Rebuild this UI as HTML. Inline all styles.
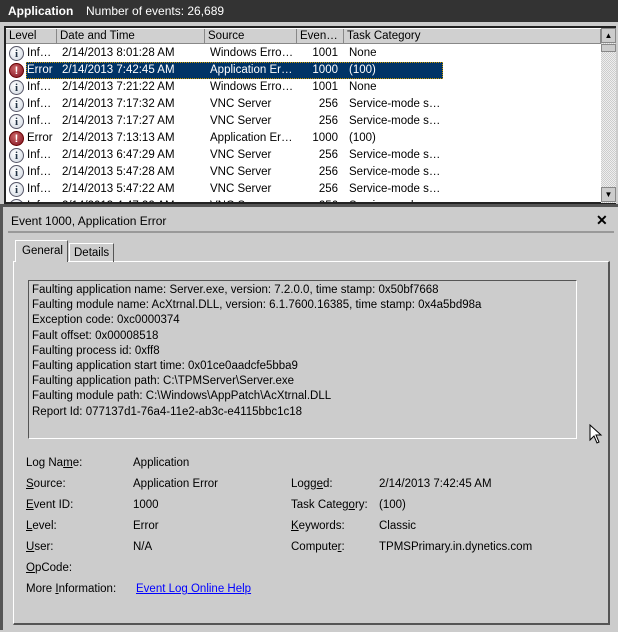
<html><head><style>
body{margin:0;width:618px;height:630px;background:#cccccc;font-family:"Liberation Sans",sans-serif;font-size:11.5px;color:#000;position:relative;overflow:hidden}
.a{position:absolute;white-space:nowrap}
.top{left:0;top:0;width:618px;height:22px;background:#333}
.list{left:4px;top:26px;width:612px;height:178px;background:#fff;border:2px solid #222;box-sizing:border-box}
.hd{top:29px;height:15px;background:#d0d0d0;border-right:1px solid #888;border-bottom:1px solid #888;box-sizing:border-box;padding-left:3px;line-height:14px}
.r{height:17px;line-height:17px}
.ic{width:15px;height:15px;border-radius:50%;border:1px solid #556;background:radial-gradient(circle at 40% 35%,#fff,#cfd6e0);box-sizing:border-box;font:bold 11px "Liberation Serif",serif;color:#234;text-align:center;line-height:14px}
.er{background:radial-gradient(circle at 40% 35%,#c66,#801020);color:#fff;border-color:#600;font-family:"Liberation Sans";}
u{text-decoration:underline}
</style></head><body>
<div class="a top"></div>
<div class="a" style="left:8px;top:4px;color:#fff;font-weight:bold;font-size:12px">Application</div>
<div class="a" style="left:86px;top:4px;color:#fff;font-size:12px">Number of events: 26,689</div>
<div class="a list"></div>
<div class="a hd" style="left:6px;width:51px">Level</div>
<div class="a hd" style="left:57px;width:148px">Date and Time</div>
<div class="a hd" style="left:205px;width:92px">Source</div>
<div class="a hd" style="left:297px;width:47px">Even…</div>
<div class="a hd" style="left:344px;width:257px">Task Category</div>
<div class="a" style="left:601px;top:28px;width:15px;height:175px;background:repeating-conic-gradient(#ccc 0 25%,#eee 0 50%) 0 0/2px 2px"></div>
<div class="a" style="left:601px;top:28px;width:15px;height:15px;background:#ccc;border:1px solid #888;box-sizing:border-box;text-align:center;font-size:8px;line-height:14px">▲</div>
<div class="a" style="left:601px;top:44px;width:15px;height:8px;background:#ccc;border:1px solid #888;box-sizing:border-box"></div>
<div class="a" style="left:601px;top:187px;width:15px;height:15px;background:#ccc;border:1px solid #888;box-sizing:border-box;text-align:center;font-size:8px;line-height:14px">▼</div>
<div class="a" style="left:26px;top:62px;width:417px;height:17px;background:#003366;outline:1px dotted #c90;outline-offset:-1px"></div>
<div class="a" style="left:6px;top:45px;width:595px;height:157px;overflow:hidden"><div id="rows" style="position:relative;left:-6px;top:-45px"></div></div>
<script>
var d=[["Inf…","2/14/2013 8:01:28 AM","Windows Erro…","1001","None",0],["Error","2/14/2013 7:42:45 AM","Application Er…","1000","(100)",1],["Inf…","2/14/2013 7:21:22 AM","Windows Erro…","1001","None",0],["Inf…","2/14/2013 7:17:32 AM","VNC Server","256","Service-mode s…",0],["Inf…","2/14/2013 7:17:27 AM","VNC Server","256","Service-mode s…",0],["Error","2/14/2013 7:13:13 AM","Application Er…","1000","(100)",2],["Inf…","2/14/2013 6:47:29 AM","VNC Server","256","Service-mode s…",0],["Inf…","2/14/2013 5:47:28 AM","VNC Server","256","Service-mode s…",0],["Inf…","2/14/2013 5:47:22 AM","VNC Server","256","Service-mode s…",0],["Inf…","2/14/2013 4:47:22 AM","VNC Server","256","Service-mode s…",0]];
var h="";d.forEach(function(r,i){var y=45+i*17,c=r[5]==1?"color:#fff;":"";
h+='<div class="a ic'+(r[5]?' er':'')+'" style="left:9px;top:'+(y+1)+'px">'+(r[5]?'!':'i')+'</div>';
h+='<div class="a r" style="'+c+'left:27px;top:'+y+'px">'+r[0]+'</div><div class="a r" style="'+c+'left:62px;top:'+y+'px">'+r[1]+'</div><div class="a r" style="'+c+'left:210px;top:'+y+'px">'+r[2]+'</div><div class="a r" style="'+c+'left:300px;top:'+y+'px;width:38px;text-align:right">'+r[3]+'</div><div class="a r" style="'+c+'left:349px;top:'+y+'px">'+r[4]+'</div>';});
document.getElementById("rows").innerHTML=h;
</script>
<div class="a" style="left:0;top:204px;width:618px;height:3px;background:#555"></div>
<div class="a" style="left:0;top:204px;width:3px;height:426px;background:#555"></div>
<div class="a" style="left:11px;top:214px;font-size:12px">Event 1000, Application Error</div>
<div class="a" style="left:596px;top:212px;font-weight:bold;font-size:14px">✕</div>
<div class="a" style="left:8px;top:231px;width:606px;height:2px;background:#999"></div>
<div class="a" style="left:13px;top:261px;width:597px;height:364px;border:1px solid #fff;border-right:2px solid #555;border-bottom:2px solid #555;box-sizing:border-box"></div>
<div class="a" style="left:15px;top:240px;width:53px;height:22px;background:#ccc;border:1px solid #fff;border-right:1px solid #555;border-bottom:none;box-sizing:border-box;padding-left:6px;line-height:20px">General</div>
<div class="a" style="left:69px;top:243px;width:45px;height:19px;border:1px solid #fff;border-right:1px solid #555;border-bottom:none;box-sizing:border-box;padding-left:4px;line-height:18px">Details</div>
<div class="a" style="left:28px;top:280px;width:549px;height:159px;border:1px solid #555;border-right-color:#fff;border-bottom-color:#fff;box-sizing:border-box;padding:2px 3px;line-height:15.2px;white-space:pre">Faulting application name: Server.exe, version: 7.2.0.0, time stamp: 0x50bf7668
Faulting module name: AcXtrnal.DLL, version: 6.1.7600.16385, time stamp: 0x4a5bd98a
Exception code: 0xc0000374
Fault offset: 0x00008518
Faulting process id: 0xff8
Faulting application start time: 0x01ce0aadcfe5bba9
Faulting application path: C:\TPMServer\Server.exe
Faulting module path: C:\Windows\AppPatch\AcXtrnal.DLL
Report Id: 077137d1-76a4-11e2-ab3c-e4115bbc1c18</div>
<div style="position:absolute;left:0;top:2px;width:618px;height:630px">
<div class="a" style="left:26px;top:455px">Log Na<u>m</u>e:</div><div class="a" style="left:133px;top:455px">Application</div>
<div class="a" style="left:26px;top:476px"><u>S</u>ource:</div><div class="a" style="left:133px;top:476px">Application Error</div>
<div class="a" style="left:26px;top:497px"><u>E</u>vent ID:</div><div class="a" style="left:133px;top:497px">1000</div>
<div class="a" style="left:26px;top:518px"><u>L</u>evel:</div><div class="a" style="left:133px;top:518px">Error</div>
<div class="a" style="left:26px;top:539px"><u>U</u>ser:</div><div class="a" style="left:133px;top:539px">N/A</div>
<div class="a" style="left:26px;top:560px"><u>O</u>pCode:</div>
<div class="a" style="left:26px;top:581px">More <u>I</u>nformation:</div><div class="a" style="left:136px;top:581px;color:#00f"><u>Event Log Online Help</u></div>
<div class="a" style="left:291px;top:476px">Logg<u>e</u>d:</div><div class="a" style="left:379px;top:476px">2/14/2013 7:42:45 AM</div>
<div class="a" style="left:291px;top:497px">Task Categ<u>o</u>ry:</div><div class="a" style="left:379px;top:497px">(100)</div>
<div class="a" style="left:291px;top:518px"><u>K</u>eywords:</div><div class="a" style="left:379px;top:518px">Classic</div>
<div class="a" style="left:291px;top:539px">Compute<u>r</u>:</div><div class="a" style="left:379px;top:539px">TPMSPrimary.in.dynetics.com</div>
</div>
<svg class="a" style="left:589px;top:424px" width="14" height="22"><path d="M1 1 L1 16 L5 12 L8 19 L10 18 L7 11 L12 11 Z" fill="#fff" stroke="#000"/></svg>
</body></html>
